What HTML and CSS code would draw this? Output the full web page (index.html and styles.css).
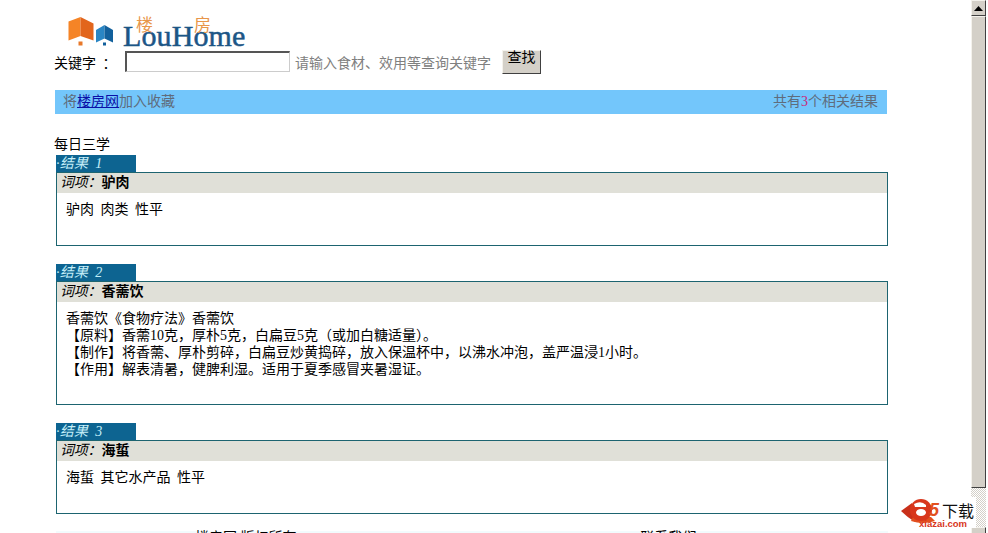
FILE: index.html
```html
<!DOCTYPE html>
<html lang="zh-CN">
<head>
  <meta charset="UTF-8" />
  <title>每日三学</title>
  <link rel="stylesheet" href="styles.css">
</head>
<body>
  <div class="page">
    <div class="main">
      <div class="logo">
        <svg class="logo-mark" width="46" height="31" viewBox="0 0 46 31">
          <path d="M1.5 4.5 L13.5 0 L13.5 19 L1.5 23.5 Z" fill="#f58426"/>
          <path d="M13.5 0 L26.5 6.5 L26.5 23.5 L13.5 19 Z" fill="#e2651c"/>
          <rect x="11.5" y="24.5" width="4" height="4" fill="#e8792a"/>
          <path d="M29 13 L37.5 8 L37.5 21.5 L29 25.5 Z" fill="#2a86c4"/>
          <path d="M37.5 8 L46 13 L46 25.5 L37.5 21.5 Z" fill="#12609c"/>
          <rect x="36" y="25.5" width="3" height="3" fill="#12609c"/>
        </svg>
        <div class="logo-word">
          <span class="logo-en">LouHome</span>
          <span class="logo-cn logo-cn-a">楼</span>
          <span class="logo-cn logo-cn-b">房</span>
        </div>
      </div>

      <form class="search">
        <label class="search-label">关键字 ：</label>
        <input class="search-input" type="text">
        <span class="search-hint">请输入食材、效用等查询关键字</span>
        <button class="search-btn" type="button">查找</button>
      </form>

      <div class="info-bar">
        <span>将<a href="#">楼房网</a>加入收藏</span>
        <span>共有<b class="count">3</b>个相关结果</span>
      </div>

      <div class="section-title">每日三学</div>

      <div class="result">
        <div class="result-tab">·结果 1</div>
        <div class="result-box result-box-short">
          <div class="result-head">词项：<b>驴肉</b></div>
          <div class="result-body">驴肉 肉类 性平</div>
        </div>
      </div>

      <div class="result">
        <div class="result-tab">·结果 2</div>
        <div class="result-box result-box-long">
          <div class="result-head">词项：<b>香薷饮</b></div>
          <div class="result-body">香薷饮《食物疗法》香薷饮<br>【原料】香薷10克，厚朴5克，白扁豆5克（或加白糖适量）。<br>【制作】将香薷、厚朴剪碎，白扁豆炒黄捣碎，放入保温杯中，以沸水冲泡，盖严温浸1小时。<br>【作用】解表清暑，健脾利湿。适用于夏季感冒夹暑湿证。</div>
        </div>
      </div>

      <div class="result result-last">
        <div class="result-tab">·结果 3</div>
        <div class="result-box result-box-short">
          <div class="result-head">词项：<b>海蜇</b></div>
          <div class="result-body">海蜇 其它水产品 性平</div>
        </div>
      </div>

      <div class="footer-bar">
        <span>楼房网 版权所有</span>
        <span>联系我们</span>
      </div>
    </div>

    <div class="scrollbar">
      <div class="scroll-btn"><svg width="9" height="5" viewBox="0 0 9 5"><path d="M4.5 0 L9 5 L0 5 Z" fill="#000"/></svg></div>
      <div class="scroll-thumb"></div>
      <div class="scroll-track"></div>
      <div class="scroll-btn"></div>
    </div>
  </div>

  <div class="badge">
    <svg width="40" height="28" viewBox="0 0 40 28">
      <path d="M0 14 L11 6 L14 25 Q6 20 0 14 Z" fill="#c9301a"/>
      <path d="M10 24 Q22 28 34 24 L30 20 L12 20 Z" fill="#e2501f"/>
      <ellipse cx="20" cy="13" rx="11" ry="11" fill="#d8361c"/>
      <ellipse cx="20" cy="15.5" rx="5" ry="3.5" fill="#fff"/>
      <path d="M13 7 Q20 3 25 8 L25 10 L14 10 Z" fill="#fff"/>
    </svg>
    <span class="badge-five">5</span>
    <span class="badge-cn">下载</span>
    <span class="badge-en">xiazai.com</span>
  </div>
</body>
</html>
```
FILE: styles.css
```css
* { box-sizing: border-box; }
html, body {
  margin: 0; padding: 0;
  height: 533px;
  overflow: hidden;
  background: #fff;
}
body {
  font-family: "Liberation Serif", "Noto Sans CJK SC", serif;
  font-size: 14px;
  font-weight: 400;
  color: #000;
  position: relative;
}
.page {
  display: flex;
  height: 533px;
}
.main {
  width: 971px;
  padding: 15px 84px 0 55px;
  overflow: hidden;
}

/* logo */
.logo {
  display: flex;
  align-items: flex-end;
  height: 33px;
  margin-left: 12px;
  gap: 10px;
}
.logo-word {
  position: relative;
  height: 33px;
  width: 122px;
}
.logo-en {
  position: absolute;
  left: 0; bottom: -5px;
  font: 400 30px "Liberation Serif", serif;
  color: #1c5686;
  -webkit-text-stroke: 0.5px #1c5686;
  letter-spacing: 0.1px;
}
.logo-cn {
  position: absolute;
  top: 2px;
  font-size: 17px;
  line-height: 18px;
  color: #e8964a;
}
.logo-cn-a { left: 13px; }
.logo-cn-b { left: 71px; }

/* search row */
.search {
  display: flex;
  align-items: center;
  height: 25px;
  margin: 1px 0 0 -1px;
}
.search-label { width: 71px; word-spacing: 3px; }
.search-input {
  align-self: flex-start;
  width: 165px;
  height: 21px;
  margin-top: 2px;
  padding: 0;
  border: 1px solid #ccc;
  border-top: 2px solid #555;
  border-left: 2px solid #555;
  background: #fff;
}
.search-hint {
  color: #808080;
  margin: 0 0 0 5px;
  width: 207px;
}
.search-btn {
  width: 39px;
  height: 24px;
  padding: 0 0 7px;
  font: inherit;
  line-height: 14px;
  color: #000;
  background: #d4d0c8;
  border: 1px solid;
  border-color: #f4f2ec #404040 #404040 #f4f2ec;
}

/* blue bar */
.info-bar {
  display: flex;
  justify-content: space-between;
  align-items: center;
  height: 24px;
  margin: 16px 0 0 0;
  padding: 0 9px 5px 8px;
  background: #73c6fb;
  color: #5f6c7c;
}
.info-bar a { color: #0a10a8; }
.count { color: #c8287a; font-weight: 400; }

.section-title {
  margin: 22px 0 0 -1px;
  height: 19px;
  line-height: 18px;
}

/* result blocks */
.result { margin: 0 -1px 18px 1px; }
.result-last { margin-bottom: 17px; }
.result-tab {
  width: 80px;
  height: 17px;
  line-height: 17px;
  background: #0d6491;
  color: #c4eef8;
  font-style: italic;
  word-spacing: 3px;
  letter-spacing: 0.3px;
}
.result-box {
  border: 1px solid #1d6470;
  background: #fff;
}
.result-box-short { height: 74px; }
.result-box-long { height: 124px; }
.result-head {
  height: 20px;
  line-height: 19px;
  padding-left: 3px;
  background: #e0e0d8;
  font-style: italic;
  letter-spacing: -0.2px;
}
.result-head b { font-style: normal; font-weight: 700; letter-spacing: 0; }
.result-body {
  padding: 8px 0 0 10px;
  line-height: 17px;
  word-spacing: 3px;
  margin-left: -1px;
}

.footer-bar {
  display: flex;
  gap: 344px;
  height: 30px;
  margin: 0 -1px 0 1px;
  padding: 0 0 0 139px;
  background: #f2fbfd;
  line-height: 14px;
}

/* fake window scrollbar */
.scrollbar {
  display: flex;
  flex-direction: column;
  width: 15px;
  height: 533px;
  overflow: hidden;
}
.scroll-btn {
  flex: none;
  height: 16px;
  display: flex;
  align-items: center;
  justify-content: center;
  background: #d4d0c8;
  border: 1px solid;
  border-color: #f4f2ec #404040 #404040 #f4f2ec;
}
.scroll-thumb {
  flex: none;
  height: 472px;
  background: #d4d0c8;
  border: 1px solid;
  border-color: #f4f2ec #404040 #404040 #f4f2ec;
}
.scroll-track {
  flex: none;
  height: 39px;
  background: repeating-conic-gradient(#d4d0c8 0 25%, #fff 0 50%) 0 0 / 2px 2px;
}

/* watermark, sits over the page corner */
.badge {
  position: absolute;
  left: 900px; top: 497px;
  width: 76px;
  height: 31px;
  background: #fff;
}
.badge svg {
  position: absolute;
  left: 1px; top: 0;
}
.badge-five {
  position: absolute;
  left: 29px; top: 5px;
  font: italic 700 18px/16px "Liberation Sans", sans-serif;
  color: #e2501f;
}
.badge-cn {
  position: absolute;
  left: 42px; top: 5px;
  font-size: 16px;
  line-height: 20px;
  color: #111;
}
.badge-en {
  position: absolute;
  left: 19px; top: 22px;
  font: 700 9.5px/10px "Liberation Sans", sans-serif;
  color: #d8361c;
}
```
